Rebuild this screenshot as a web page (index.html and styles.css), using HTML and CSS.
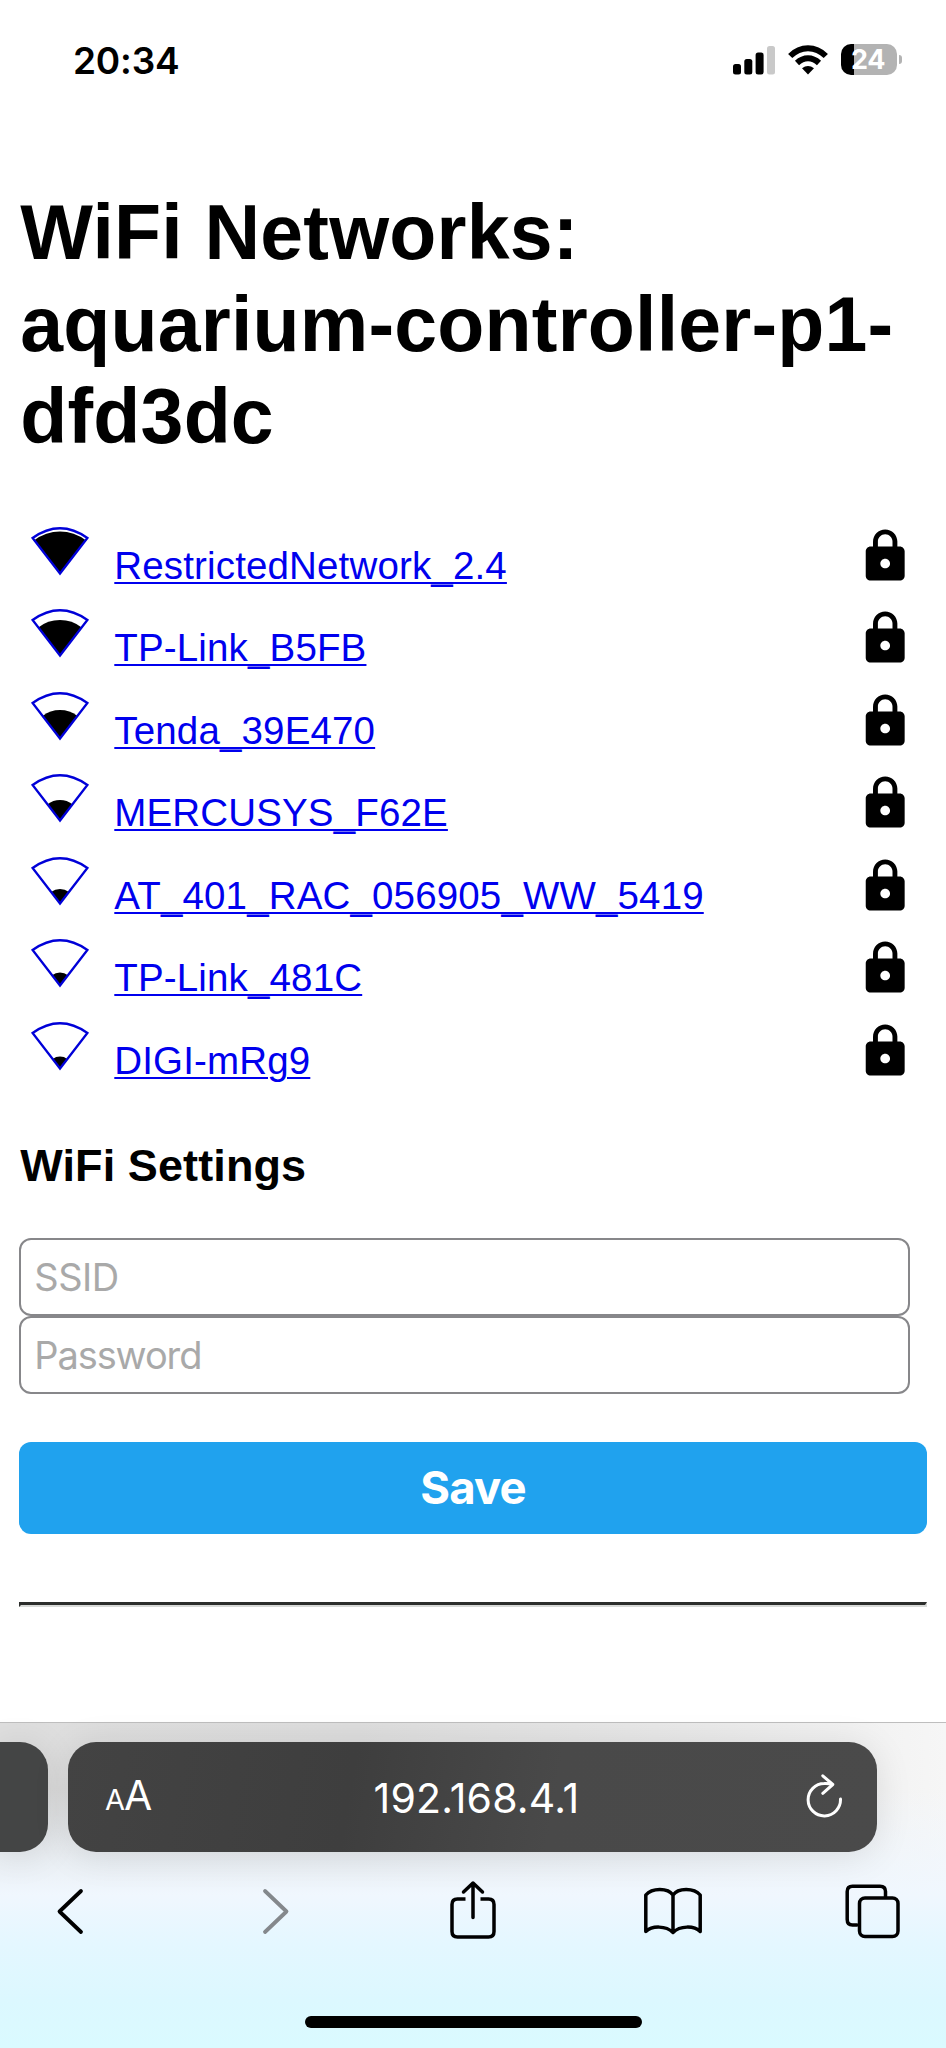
FILE: index.html
```html
<!DOCTYPE html>
<html lang="en">
<head>
<meta charset="utf-8">
<title>WiFi Networks</title>
<link rel="stylesheet" href="styles.css">
</head>
<body>
<svg class="defs" width="0" height="0" aria-hidden="true">
  <symbol id="lock" viewBox="0 0 24 24"><path d="M18 8h-1V6c0-2.76-2.24-5-5-5S7 3.24 7 6v2H6c-1.1 0-2 .9-2 2v10c0 1.1.9 2 2 2h12c1.1 0 2-.9 2-2V10c0-1.1-.9-2-2-2zm-6 9c-1.1 0-2-.9-2-2s.9-2 2-2 2 .9 2 2-.9 2-2 2zm3-9H9V6c0-1.66 1.34-3 3-3s3 1.34 3 3v2z"/></symbol>
  <symbol id="cone" viewBox="0 0 60 52"><path d="M30 48.500L2.600 13Q30 -6.500 57.400 13Z" fill="none" stroke="#0000d8" stroke-width="2.300"/></symbol>
</svg>
<div class="phone">
  <header class="status">
    <span class="time">20:34</span>
    <div class="indicators">
      <svg width="43" height="30" viewBox="0 0 43 30"><rect x="0" y="19" width="8" height="10.500" rx="2.500"/><rect x="11.300" y="14" width="8" height="15.500" rx="2.500"/><rect x="22.600" y="7.500" width="8" height="22" rx="2.500"/><rect x="34" y="1" width="8" height="28.500" rx="2.500" fill="#c9c9c9"/></svg>
      <svg class="wifi" width="40" height="30" viewBox="0 0 40 30"><path d="M2.200 11Q10 3.200 20 3.200T37.800 11M9 18Q14 13.300 20 13.300T31 18" fill="none" stroke="#000" stroke-width="6"/><path d="M20 29.500L14 23.300Q20 18.500 26 23.300Z"/></svg>
      <div class="battery"><span class="level">24</span></div>
      <i class="nub"></i>
    </div>
  </header>
  <main class="page">
    <h1>WiFi Networks: aquarium-controller-p1-dfd3dc</h1>
    <ul class="networks">
      <li><svg class="sig" viewBox="0 0 60 52"><path d="M30 48.500L4.300 15.300A42 42 0 0 1 55.700 15.300Z"/><use href="#cone"/></svg><a href="#">RestrictedNetwork_2.4</a><svg class="lock"><use href="#lock"/></svg></li>
      <li><svg class="sig" viewBox="0 0 60 52"><path d="M30 48.500L8.300 20.500A35.500 35.500 0 0 1 51.700 20.500Z"/><use href="#cone"/></svg><a href="#">TP-Link_B5FB</a><svg class="lock"><use href="#lock"/></svg></li>
      <li><svg class="sig" viewBox="0 0 60 52"><path d="M30 48.500L12.600 26A28.500 28.500 0 0 1 47.400 26Z"/><use href="#cone"/></svg><a href="#">Tenda_39E470</a><svg class="lock"><use href="#lock"/></svg></li>
      <li><svg class="sig" viewBox="0 0 60 52"><path d="M30 48.500L17.500 32.300A20.500 20.500 0 0 1 42.500 32.300Z"/><use href="#cone"/></svg><a href="#">MERCUSYS_F62E</a><svg class="lock"><use href="#lock"/></svg></li>
      <li><svg class="sig" viewBox="0 0 60 52"><path d="M30 48.500L21.100 37A14.500 14.500 0 0 1 38.900 37Z"/><use href="#cone"/></svg><a href="#">AT_401_RAC_056905_WW_5419</a><svg class="lock"><use href="#lock"/></svg></li>
      <li><svg class="sig" viewBox="0 0 60 52"><path d="M30 48.500L22 38.200A13 13 0 0 1 38 38.200Z"/><use href="#cone"/></svg><a href="#">TP-Link_481C</a><svg class="lock"><use href="#lock"/></svg></li>
      <li><svg class="sig" viewBox="0 0 60 52"><path d="M30 48.500L22.700 39A12 12 0 0 1 37.300 39Z"/><use href="#cone"/></svg><a href="#">DIGI-mRg9</a><svg class="lock"><use href="#lock"/></svg></li>
    </ul>
    <h3>WiFi Settings</h3>
    <form class="settings">
      <input type="text" placeholder="SSID">
      <input class="secret" type="password" placeholder="Password">
      <button type="button">Save</button>
    </form>
    <div class="rule"></div>
  </main>
  <footer class="browser">
    <div class="tabs">
      <div class="previous"></div>
      <div class="address">
        <span class="reader"><small>A</small>A</span>
        <span class="url">192.168.4.1</span>
        <svg class="reload" width="40" height="48" viewBox="0 0 40 48"><path d="M36.500 26A16.200 16.200 0 1 1 20.300 10.500Q24 10.200 28.500 11.300M18.800 2.800L28.800 11.500L18.800 20.300" fill="none" stroke="#fff" stroke-width="3" stroke-linecap="round" stroke-linejoin="round"/></svg>
      </div>
    </div>
    <nav class="tools">
      <svg width="28" height="62" viewBox="0 0 28 62"><path d="M25 11L3.500 31.500L25 52" stroke-width="3.800"/></svg>
      <svg class="dim" width="28" height="62" viewBox="0 0 28 62"><path d="M3 11L24.500 31.500L3 52" stroke-width="3.800"/></svg>
      <svg width="48" height="62" viewBox="0 0 48 62"><path d="M16.500 19H8.500Q3 19 3 24.500V51.500Q3 57 8.500 57H39.500Q45 57 45 51.500V24.500Q45 19 39.500 19H31.500" stroke-linecap="butt"/><path d="M24 37.500V3M14.500 12L24 3L33.500 12"/></svg>
      <svg width="60" height="62" viewBox="0 0 60 62"><path d="M30 15V52.500M30 15C25 7.500 9 7.500 2.800 15V51.500C9 45.500 23 45.500 30 52.500C37 45.500 51 45.500 57.200 51.500V15C51 7.500 35 7.500 30 15"/></svg>
      <svg width="56" height="62" viewBox="0 0 56 62"><path d="M13 45H8.500Q3.200 45 3.200 39.500V11.500Q3.200 6.200 8.500 6.200H36Q41.500 6.200 41.500 11.500V17"/><rect x="15.500" y="18" width="38.500" height="38.500" rx="5.500"/></svg>
    </nav>
    <div class="home"></div>
  </footer>
</div>
</body>
</html>
```
FILE: styles.css
```css
* { box-sizing: border-box; }
body { margin: 0; background: #fff; color: #000; font-family: "Liberation Sans", Arial, sans-serif; }
.defs { display: block; }
.phone { width: 946px; height: 2048px; display: flex; flex-direction: column; overflow: hidden; }

.status { height: 121px; flex: none; display: flex; align-items: center; justify-content: space-between; padding: 0 44px 0 73px; font-family: Inter, sans-serif; }
.time { font-size: 37px; font-weight: 600; line-height: 44px; letter-spacing: -0.2px; }
.indicators { display: flex; align-items: center; padding-bottom: 2px; }
.indicators svg { display: block; }
.indicators .wifi { margin: 0 13px 0 12px; }
.battery { width: 56px; height: 31px; border-radius: 10px; background: linear-gradient(90deg, #000 13px, #b3b3b3 13px); display: flex; align-items: center; justify-content: center; }
.level { color: #fff; font-size: 27px; font-weight: 700; line-height: 30px; letter-spacing: -0.5px; padding-right: 2px; }
.nub { width: 3px; height: 9px; margin-left: 2px; border-radius: 0 4px 4px 0; background: #b3b3b3; }

.page { height: 1601px; flex: none; padding: 64.700px 19.300px 0; }
h1 { margin: 0; padding-left: 1px; font-size: 77px; line-height: 92.300px; font-weight: 700; letter-spacing: 0.200px; }
.networks { list-style: none; margin: 61.400px 0 0; padding: 0 12px; }
.networks li { height: 82.500px; display: flex; align-items: flex-start; }
.sig { width: 60px; height: 52px; flex: none; margin: 1px 0 0 -1.500px; }
.networks a { flex: 1; margin-left: 24.500px; color: #0000ee; font-size: 38.500px; line-height: 83px; letter-spacing: 0.150px; text-decoration-thickness: 2.400px; text-underline-offset: 3px; }
.lock { width: 58.400px; height: 58.400px; margin-top: 2.600px; flex: none; }
h3 { margin: 38.400px 0 46.100px; padding-left: 1px; font-size: 45px; line-height: 52px; font-weight: 700; letter-spacing: 0.100px; }
.settings { display: flex; flex-direction: column; }
.settings input { width: 890.500px; height: 78px; margin: 0; padding: 0 13px; border: 2.400px solid #87878a; border-radius: 12px; background: #fff; font: 400 38px Inter, sans-serif; letter-spacing: -0.5px; }
.settings .secret { letter-spacing: -1.100px; }
.settings input::placeholder { color: #a9a9a9; opacity: 1; }
.settings button { height: 92px; margin-top: 48px; padding: 0; border: 0; border-radius: 12px; background: #20a2ee; color: #fff; font: 700 45.500px Inter, sans-serif; letter-spacing: -0.9px; }
.rule { margin-top: 68px; height: 5px; border-style: solid; border-width: 3px 2px 2px; border-color: #2c2e2c #d8dad8 #d8dad8 #2c2e2c; }

.browser { flex: 1; display: flex; flex-direction: column; border-top: 1px solid #bebebe; background:
  linear-gradient(180deg, rgba(240,247,254,0) 20%, #f0f7fe 53%, #e4f7ff 68%, #dcf8ff 85%, #dafaff 100%),
  linear-gradient(90deg, #dedede 0%, #dddddd 38%, #eaeaea 75%, #f6f6f6 100%); }
.tabs { height: 110px; flex: none; margin-top: 18.500px; display: flex; gap: 20px; }
.previous { width: 48px; border-radius: 0 28px 28px 0; background: #444545; box-shadow: 0 4px 36px rgba(0,0,0,.1); }
.address { width: 809px; border-radius: 28px; padding: 0 33px 0 37px; display: grid; grid-template-columns: 60px 1fr 60px; align-items: center; color: #fff; font-family: Inter, sans-serif; background: linear-gradient(100deg, #434343 0%, #3e3e3e 35%, #494949 60%, #4a4a4a 100%); box-shadow: 0 4px 36px rgba(0,0,0,.1); }
.reader { font-size: 41px; line-height: 50px; letter-spacing: -1px; padding-top: 2px; white-space: nowrap; }
.reader small { font-size: 29px; }
.url { font-size: 41px; line-height: 50px; letter-spacing: 0.200px; text-align: center; padding: 2px 0 0 4px; }
.reload { display: block; justify-self: end; }
.tools { height: 62px; flex: none; margin-top: 28px; padding-left: 56px; display: grid; grid-template-columns: 205.500px 187.500px 194px 201px 56px; }
.tools svg { display: block; fill: none; stroke: #000; stroke-width: 3.500px; stroke-linecap: round; stroke-linejoin: round; }
.tools .dim { stroke: #84888c; }
.home { width: 337px; height: 12.500px; margin: 74px auto 0; border-radius: 7px; background: #000; }
```
